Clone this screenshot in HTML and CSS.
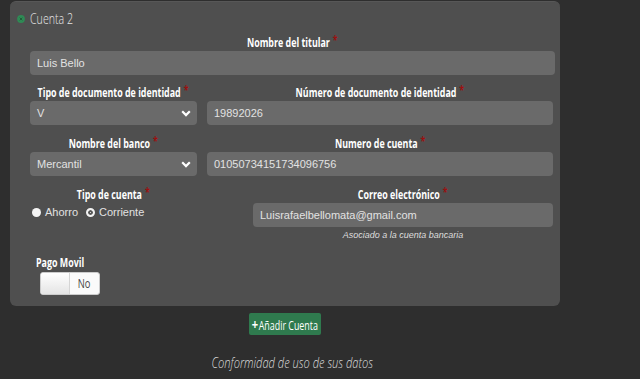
FILE: index.html
```html
<!DOCTYPE html>
<html lang="es">
<head>
<meta charset="utf-8">
<title>Cuenta</title>
<link rel="stylesheet" href="styles.css">
</head>
<body>
<div class="page">
  <section class="card">
    <div class="card-head">
      <span class="dot"><svg viewBox="0 0 8 8" width="8" height="8"><circle cx="4" cy="4" r="3.9" fill="#2f8a55"/><path d="M2.7 2.7L5.3 5.3M5.3 2.7L2.7 5.3" stroke="#1f5e3a" stroke-width="1"/></svg></span>
      <span class="head-title">Cuenta 2</span>
    </div>

    <div class="group">
      <label class="lbl"><span class="t">Nombre del titular<span class="req">*</span></span></label>
      <div class="field">Luis Bello</div>
    </div>

    <div class="row">
      <div class="group">
        <label class="lbl"><span class="t">Tipo de documento de identidad<span class="req">*</span></span></label>
        <div class="field select">V<svg class="chev" viewBox="0 0 10 7" width="10" height="7"><path d="M1.2 1.3L5 5.1L8.8 1.3" fill="none" stroke="#fff" stroke-width="2.2"/></svg></div>
      </div>
      <div class="group">
        <label class="lbl"><span class="t">Número de documento de identidad<span class="req">*</span></span></label>
        <div class="field">19892026</div>
      </div>
    </div>

    <div class="row">
      <div class="group">
        <label class="lbl"><span class="t">Nombre del banco<span class="req">*</span></span></label>
        <div class="field select">Mercantil<svg class="chev" viewBox="0 0 10 7" width="10" height="7"><path d="M1.2 1.3L5 5.1L8.8 1.3" fill="none" stroke="#fff" stroke-width="2.2"/></svg></div>
      </div>
      <div class="group">
        <label class="lbl"><span class="t">Numero de cuenta<span class="req">*</span></span></label>
        <div class="field">01050734151734096756</div>
      </div>
    </div>

    <div class="row">
      <div class="group">
        <label class="lbl"><span class="t">Tipo de cuenta<span class="req">*</span></span></label>
        <div class="radios">
          <span class="radio"></span><span class="rtxt">Ahorro</span>
          <span class="radio checked"></span><span class="rtxt">Corriente</span>
        </div>
      </div>
      <div class="group offset">
        <label class="lbl"><span class="t">Correo electrónico<span class="req">*</span></span></label>
        <div class="field">Luisrafaelbellomata@gmail.com</div>
        <p class="help">Asociado a la cuenta bancaria</p>
      </div>
    </div>

    <div class="pago">
      <label class="lbl left"><span class="t">Pago Movil</span></label>
      <div class="toggle"><span class="knob"></span><span class="toff"><span class="tn">No</span></span></div>
    </div>
  </section>

  <div class="actions">
    <button class="btn-add"><span class="bt"><span class="plus">+</span>Añadir Cuenta</span></button>
  </div>

  <p class="conform"><span class="ct">Conformidad de uso de sus datos</span></p>
</div>
</body>
</html>
```

FILE: styles.css
```css
* { box-sizing: border-box; }
html, body { margin: 0; padding: 0; }
body {
  background: #2e2e2e;
  width: 640px;
  height: 379px;
  overflow: hidden;
  font-family: "Liberation Sans", Arial, sans-serif;
}
.page { padding: 1px 80px 0 10px; }
.card {
  width: 550px;
  background: #4f4f4f;
  border-radius: 6px;
  padding: 7px 5px 11px 20px;
  border-top: 1px solid #575757;
}
.card-head {
  display: flex;
  align-items: center;
  height: 19px;
  margin-left: -13px;
  margin-bottom: 7px;
}
.dot { width: 8px; height: 8px; display: flex; margin-right: 5px; }
.head-title {
  display: inline-block;
  font-family: "Open Sans", sans-serif;
  font-weight: 300;
  font-size: 14px;
  color: #e6e6e6;
  transform: scaleX(0.76);
  transform-origin: left center;
}
.lbl {
  display: flex;
  justify-content: center;
  white-space: nowrap;
  font-family: "Open Sans", sans-serif;
  font-weight: bold;
  font-size: 12px;
  line-height: 16px;
  color: #fff;
}
.lbl .t {
  display: inline-block;
  flex: none;
  transform: scaleX(0.74);
  transform-origin: center;
}
.lbl.left { justify-content: flex-start; }
.lbl.left .t { transform-origin: left center; }
.req { color: #9c1010; margin-left: 4px; position: relative; top: -2px; font-size: 12px; }
.group { margin-bottom: 10px; }
.row .group { margin-bottom: 11px; }
.field {
  height: 24px;
  background: #6a6a6a;
  border-radius: 4px;
  color: #e2e2e2;
  font-size: 11px;
  line-height: 24px;
  padding: 0 7px;
  position: relative;
  white-space: nowrap;
}
.select { padding-right: 20px; }
.chev { position: absolute; right: 6px; top: 9px; }
.row {
  display: grid;
  grid-template-columns: 167px 1fr;
  column-gap: 10px;
  padding-right: 2px;
}
.radios {
  display: flex;
  align-items: center;
  height: 18px;
  color: #e2e2e2;
  font-size: 11px;
  padding-left: 2px;
}
.radio {
  width: 9px; height: 9px;
  border-radius: 50%;
  background: #f4f4f4;
  margin-right: 4px;
}
.radio.checked { background: #fff; border: 2.5px solid #f2f2f2; box-shadow: inset 0 0 0 2px #555; }
.rtxt { margin-right: 8px; }
.offset { padding-left: 46px; }
.help {
  margin: 2px 0 0;
  text-align: center;
  font-size: 9px;
  font-style: italic;
  color: #dedede;
  line-height: 12px;
  white-space: nowrap;
}
.pago { width: 70px; margin-left: 6px; margin-top: 3px; }
.toggle {
  margin: 1px 0 0 4px;
  width: 60px; height: 23px;
  border-radius: 3px;
  background: #fafafa;
  border: 1px solid #ccc;
  display: flex;
  overflow: hidden;
}
.knob {
  width: 29px;
  background: linear-gradient(#fff, #e4e4e4);
  border-right: 1px solid #d5d5d5;
}
.toff {
  flex: 1;
  text-align: center;
  font-family: "Open Sans", sans-serif;
  font-size: 12px;
  line-height: 21px;
  color: #444;
}
.tn { display: inline-block; transform: scaleX(0.78); }
.actions { display: flex; justify-content: center; margin-top: 7px; }
.btn-add {
  width: 72px; height: 22px;
  background: #2f7a4e;
  border: 0;
  border-radius: 2px;
  color: #fff;
  font-family: "Open Sans", sans-serif;
  font-size: 12px;
  padding: 0;
  white-space: nowrap;
  display: flex; align-items: center; justify-content: center;
}
.bt { display: inline-block; transform: scaleX(0.74); }
.plus { font-weight: bold; font-size: 15px; margin-right: 1px; }
.conform {
  margin: 17px 0 0;
  text-align: center;
  padding-left: 14px;
  font-family: "Open Sans", sans-serif;
  font-style: italic;
  font-weight: 300;
  font-size: 15px;
  color: #dcdcdc;
  white-space: nowrap;
}
.ct { display: inline-block; transform: scaleX(0.74); }
```
